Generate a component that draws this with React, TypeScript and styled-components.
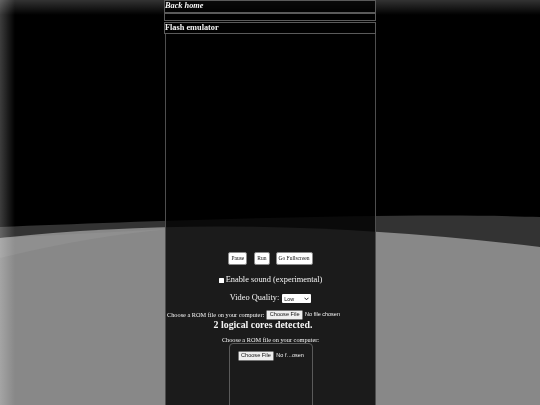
import React from "react";
import styled, { createGlobalStyle } from "styled-components";

const GlobalStyle = createGlobalStyle`
  html, body {
    margin: 0;
    padding: 0;
    height: 100%;
    overflow: hidden;
    background: #000;
  }
  body {
    font-family: "Liberation Serif", "Times New Roman", serif;
    color: #f2f2f2;
  }
  * { box-sizing: border-box; }
`;

const Backdrop = styled.div`
  position: fixed;
  inset: 0;
  z-index: 0;
  background: #000;
  svg { display: block; width: 100%; height: 100%; }
`;

const Glow = styled.div`
  position: fixed;
  inset: 0;
  z-index: 1;
  pointer-events: none;
  background:
    linear-gradient(to right, rgba(255, 255, 255, 0.24), rgba(255, 255, 255, 0) 15px),
    linear-gradient(to bottom, rgba(255, 255, 255, 0.2), rgba(255, 255, 255, 0) 15px);
`;

const Page = styled.div`
  position: relative;
  z-index: 2;
  width: 212px;
  margin: 0 auto;
  display: flex;
  flex-direction: column;
`;

const Bar = styled.div<{ $h: number; $mt?: number }>`
  height: ${(p) => p.$h}px;
  margin-top: ${(p) => p.$mt ?? 0}px;
  border: 1px solid #5a5a5a;
  background: rgba(0, 0, 0, 0.8);
  display: flex;
  align-items: center;
  padding-left: 0;
`;

const BackLink = styled.a`
  font-weight: bold;
  font-style: italic;
  font-size: 8.3px;
  color: #f4f4f4;
  text-decoration: none;
  line-height: 1;
`;

const Title = styled.h2`
  margin: 0;
  font-weight: bold;
  font-size: 8.3px;
  line-height: 1;
  color: #f4f4f4;
`;

const Main = styled.div`
  margin-left: 1px;
  border: 1px solid #4e4e4e;
  border-top: none;
  background: rgba(0, 0, 0, 0.8);
  display: flex;
  flex-direction: column;
  padding-bottom: 40px;
`;

const Screen = styled.div`
  height: 218px;
`;

const Row = styled.div<{ $mt?: number; $h: number; $align?: string; $pad?: string }>`
  margin-top: ${(p) => p.$mt ?? 0}px;
  height: ${(p) => p.$h}px;
  display: flex;
  align-items: center;
  justify-content: ${(p) => p.$align ?? "center"};
  padding: ${(p) => p.$pad ?? "0"};
  white-space: nowrap;
`;

const Btn = styled.button<{ $ml?: number }>`
  height: 13px;
  margin-left: ${(p) => p.$ml ?? 0}px;
  padding: 0 2px;
  background: #fff;
  border: 1px solid #8a8a8a;
  border-radius: 2px;
  font-family: "Liberation Serif", serif;
  font-size: 5.5px;
  color: #111;
  line-height: 1;
`;

const Check = styled.span`
  display: inline-block;
  width: 5px;
  height: 5px;
  background: #fff;
  border-radius: 0.5px;
  margin-right: 2px;
`;

const Label = styled.span<{ $size: number }>`
  font-size: ${(p) => p.$size}px;
  line-height: 1;
  color: #f2f2f2;
`;

const SelectBox = styled.span`
  position: relative;
  display: inline-flex;
  align-items: center;
  width: 29px;
  height: 9px;
  margin-left: 3px;
  background: #fff;
  border-radius: 1px;
  font-family: "Liberation Sans", Arial, sans-serif;
  font-size: 5.4px;
  color: #111;
  padding-left: 2px;
`;

const Chevron = styled.svg`
  position: absolute;
  right: 2px;
  top: 2.5px;
  width: 5px;
  height: 4px;
`;

const FileButton = styled.span<{ $ml?: number }>`
  display: inline-flex;
  align-items: center;
  height: 9.5px;
  margin-left: ${(p) => p.$ml ?? 0}px;
  padding: 0 2.5px;
  background: #efefef;
  border: 1px solid #767676;
  border-radius: 1.5px;
  font-family: "Liberation Sans", Arial, sans-serif;
  font-size: 5.6px;
  color: #111;
  line-height: 1;
`;

const FileName = styled.span`
  margin-left: 2px;
  font-family: "Liberation Sans", Arial, sans-serif;
  font-size: 5.5px;
  color: #f2f2f2;
  line-height: 1;
`;

const Cores = styled.h3`
  margin: 0;
  height: 10px;
  display: flex;
  align-items: center;
  justify-content: center;
  padding-right: 15px;
  font-size: 9.85px;
  font-weight: bold;
  line-height: 1;
  color: #f4f4f4;
`;

const Drop = styled.div`
  width: 84px;
  height: 90px;
  margin: -1px auto 0;
  border: 1px solid #5a5a5a;
  border-radius: 4px;
  padding: 7px 0 0 8px;
  display: flex;
  align-items: flex-start;
  white-space: nowrap;
`;

const DropInner = styled.div`
  display: flex;
  align-items: center;
`;

export default function App() {
  return (
    <>
      <GlobalStyle />
      <Backdrop>
        <svg viewBox="0 0 540 405" preserveAspectRatio="none">
          <rect x="0" y="0" width="540" height="405" fill="#000" />
          <path d="M0,227 C150,221 400,212 540,217 L540,405 L0,405 Z" fill="#333" />
          <path d="M0,238 Q245,211 540,247 L540,405 L0,405 Z" fill="#888" />
          <path d="M0,258 Q90,236 170,229 L0,238 Z" fill="#8f8f8f" />
        </svg>
      </Backdrop>
      <Glow />
      <Page>
        <Bar $h={13}>
          <BackLink href="#">Back home</BackLink>
        </Bar>
        <Bar $h={8} />
        <Bar $h={12} $mt={1}>
          <Title>Flash emulator</Title>
        </Bar>
        <Main>
          <Screen />
          <Row $h={13}>
            <Btn>Pause</Btn>
            <Btn $ml={7}>Run</Btn>
            <Btn $ml={6}>Go Fullscreen</Btn>
          </Row>
          <Row $h={10} $mt={10}>
            <Check />
            <Label $size={8.4}>Enable sound (experimental)</Label>
          </Row>
          <Row $h={11} $mt={8}>
            <Label $size={8.4}>Video Quality:</Label>
            <SelectBox>
              Low
              <Chevron viewBox="0 0 10 8">
                <path d="M1 1.5 L5 5.5 L9 1.5" fill="none" stroke="#222" strokeWidth="2" />
              </Chevron>
            </SelectBox>
          </Row>
          <Row $h={10} $mt={6} $align="flex-start" $pad="0 0 0 1px">
            <Label $size={6.3}>Choose a ROM file on your computer:</Label>
            <FileButton $ml={2}>Choose File</FileButton>
            <FileName>No file chosen</FileName>
          </Row>
          <Cores>2 logical cores detected.</Cores>
          <Row $h={8} $mt={6}>
            <Label $size={6.3}>Choose a ROM file on your computer:</Label>
          </Row>
          <Drop>
            <DropInner>
              <FileButton>Choose File</FileButton>
              <FileName>No f…osen</FileName>
            </DropInner>
          </Drop>
        </Main>
      </Page>
    </>
  );
}
